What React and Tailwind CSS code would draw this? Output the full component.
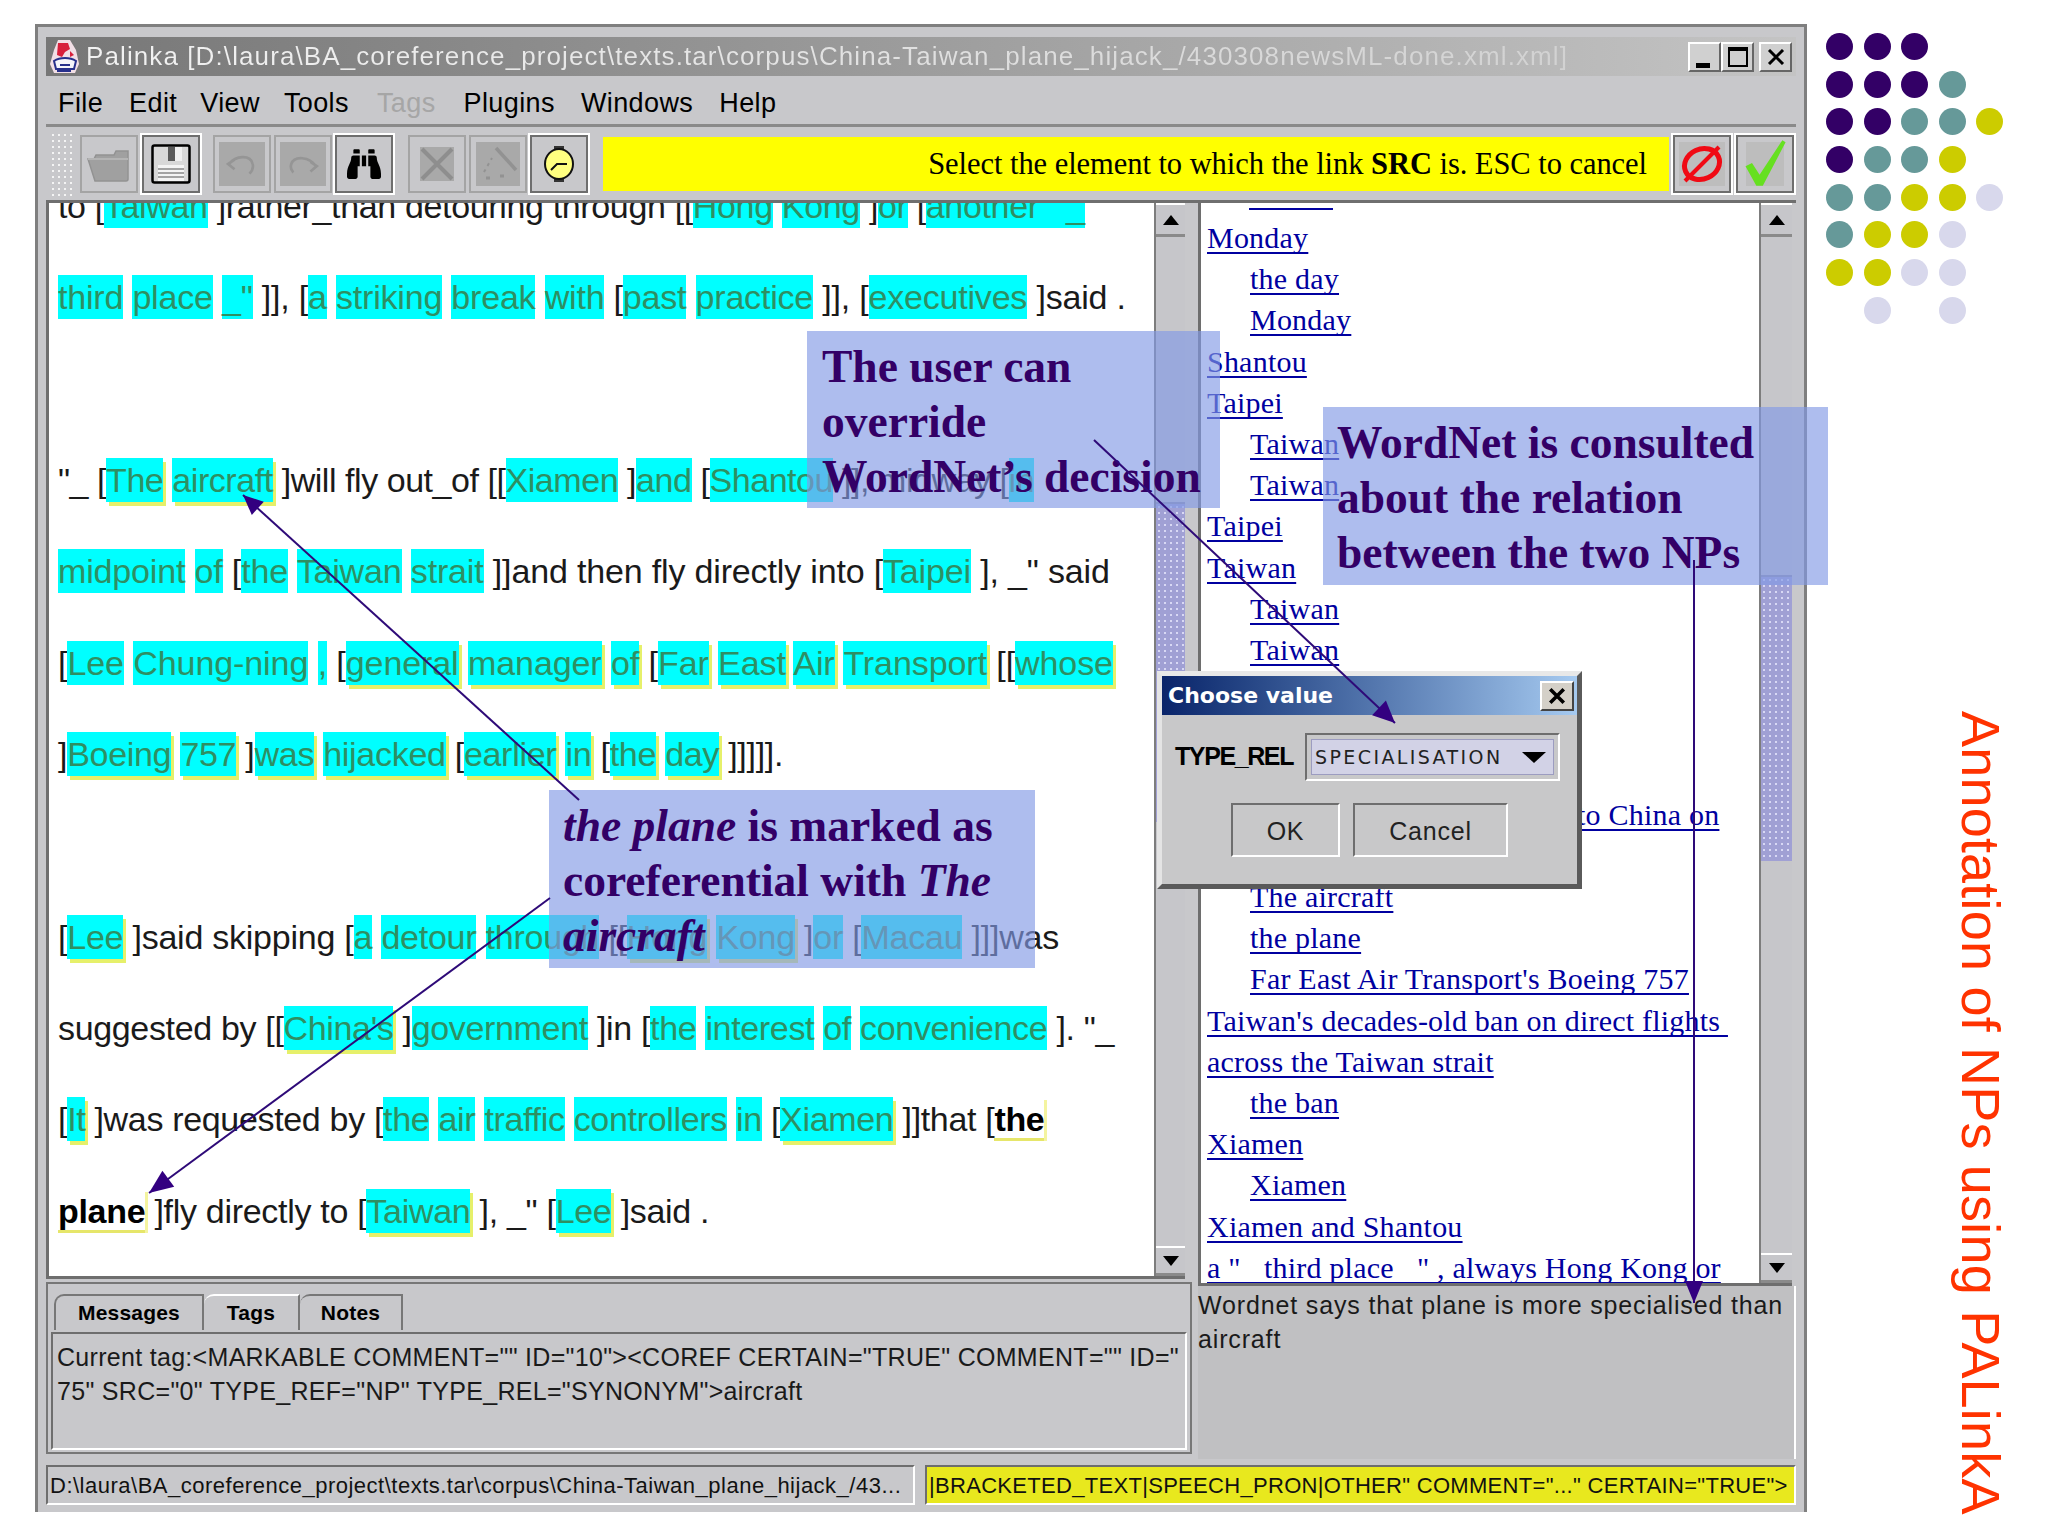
import { FaBinoculars } from 'react-icons/fa';

const sans = "font-['Liberation_Sans',Arial,sans-serif]";
const serif = "font-['Liberation_Serif','Times_New_Roman',serif]";

// {word} cyan, <word> cyan + yellow shadow, *word* bold with yellow underline
const textLines = [
  ['tracking-[-0.35px]', 'to [{Taiwan} ]rather_than detouring through [[{Hong} {Kong} ]{or} [{another   _}'],
  ['tracking-[-0.2px]', '{third} {place} {_"} ]], [{a} {striking} {break} {with} [{past} {practice} ]], [{executives} ]said .'],
  ['', ''],
  ['tracking-[-0.45px]', '"_ [<The> <aircraft> ]will fly out_of [[{Xiamen} ]{and} [{Shantou} ]], midway [{in}'],
  ['tracking-[-0.16px]', '{midpoint} {of} [{the} {Taiwan} {strait} ]]and then fly directly into [{Taipei} ], _" said'],
  ['tracking-[-0.08px]', '[{Lee} {Chung-ning} {,} [<general> <manager> <of> [<Far> <East> <Air> <Transport> [[<whose>'],
  ['tracking-[-0.3px]', ']<Boeing> <757> ]<was> <hijacked> [<earlier> <in> [<the> <day> ]]]]].'],
  ['', ''],
  ['tracking-[-0.24px]', '[<Lee> ]said skipping [{a} {detour} {through} [[<Hong> <Kong> ]{or} [{Macau} ]]]was'],
  ['tracking-[-0.34px]', 'suggested by [[<China\'s> ]{government} ]in [{the} {interest} {of} {convenience} ]. "_'],
  ['tracking-[-0.33px]', '[<It> ]was requested by [{the} {air} {traffic} {controllers} {in} [<Xiamen> ]]that [*the*'],
  ['tracking-[-0.3px]', '*plane* ]fly directly to [<Taiwan> ], _" [<Lee> ]said .'],
];

function TextLine({ line, cls }) {
  const parts = line.split(/(\{[^}]*\}|<[^>]*>|\*[^*]*\*)/).filter(Boolean);
  return (
    <div className={`h-[91.33px] leading-[91.33px] whitespace-pre ${cls}`}>
      {parts.map((p, i) => {
        const inner = p.slice(1, -1);
        if (p[0] === '{') return <span key={i} className="bg-[#00ffff] text-[#2e8f63] py-[3px]">{inner}</span>;
        if (p[0] === '<') return <span key={i} className="bg-[#00ffff] text-[#2e8f63] py-[3px] shadow-[3px_4px_0_#e6f06a]">{inner}</span>;
        if (p[0] === '*') return <span key={i} className="font-bold text-black border-b-[3px] border-[#e6e66a] shadow-[3px_0_0_#f4f4a0]">{inner}</span>;
        return <span key={i}>{p}</span>;
      })}
    </div>
  );
}

const listRows = [
  ['Monday', 0], ['the day', 1], ['Monday', 1], ['Shantou', 0], ['Taipei', 0], ['Taiwan', 1], ['Taiwan', 1],
  ['Taipei', 0], ['Taiwan', 0], ['Taiwan', 1], ['Taiwan', 1], ['', 0], ['', 0], ['', 0],
  ['to China on', 2], ['', 0], ['The aircraft', 1], ['the plane', 1], ["Far East Air Transport's Boeing 757", 1],
  ["Taiwan's decades-old ban on direct flights ", 0], ['across the Taiwan strait', 0], ['the ban', 1],
  ['Xiamen', 0], ['Xiamen', 1], ['Xiamen and Shantou', 0], ['a "   third place   " , always Hong Kong or', 0],
];

const dotColors = {
  P: 'bg-[#330066]',
  T: 'bg-[#669999]',
  Y: 'bg-[#cccc00]',
  L: 'bg-[#d8d8ec]',
  '-': 'bg-transparent',
};
const dots = ['PPP--', 'PPPT-', 'PPTTY', 'PTTY-', 'TTYYL', 'TYYL-', 'YYLL-', '-L-L-'];

const flatBtn = 'w-[58px] h-[58px] border-2 border-[#a4a4a4] flex items-center justify-center';
const etchBtn = 'w-[58px] h-[58px] border-2 border-t-[#6e6e6e] border-l-[#6e6e6e] border-r-[#6e6e6e] border-b-[#6e6e6e] outline-2 outline-white flex items-center justify-center';
const etchBox = 'border-2 border-t-[#6e6e6e] border-l-[#6e6e6e] border-r-white border-b-white';

function WinBtn({ children, cls = '' }) {
  return (
    <div className={`w-[33px] h-[30px] bg-[#d0d0d0] border-2 border-t-white border-l-white border-r-[#666] border-b-[#666] flex ${cls}`}>
      {children}
    </div>
  );
}

function ScrollBar({ thumbTop, thumbHeight, w }) {
  return (
    <div className={`${w} shrink-0 flex flex-col bg-[#c6c6ca] border-l-2 border-[#7d7d7d]`}>
      <div className="h-[34px] shrink-0 flex items-center justify-center border-b-[3px] border-[#8a8a8a] border-t-2 border-t-white">
        <div className="w-0 h-0 border-x-[8px] border-x-transparent border-b-[10px] border-b-black" />
      </div>
      <div className={thumbTop} />
      <div className={`${thumbHeight} shrink-0 bg-[#a0a0d4] bg-[radial-gradient(#d8d8f4_1.2px,transparent_1.4px)] bg-[length:6px_6px] border-t-2 border-[#9090a8]`} />
      <div className="flex-1" />
      <div className="h-[30px] shrink-0 flex items-center justify-center border-t-2 border-white border-b-[3px] border-b-[#8a8a8a]">
        <div className="w-0 h-0 border-x-[8px] border-x-transparent border-t-[10px] border-t-black" />
      </div>
    </div>
  );
}

function Toolbar() {
  return (
    <div className="h-[76px] flex items-center pl-[4px] pr-[2px] gap-[3px] border-b-[3px] border-[#6f6f6f]">
      <div className="w-[22px] h-[64px] mr-[5px] bg-[radial-gradient(#f4f4f4_1.3px,transparent_1.5px)] bg-[length:6px_6px]" />
      <div className={flatBtn}>
        <svg viewBox="0 0 44 36" className="w-[44px] h-[36px]">
          <path d="M1 13h6l2-4h18l2-4h12v28q0 2-2 2H8z" fill="#a0a0a0" stroke="#929292" strokeWidth="1.5" />
          <path d="M1 13h40" stroke="#b4b4b4" strokeWidth="2" />
        </svg>
      </div>
      <div className={`${etchBtn} ml-[1px]`}>
        <svg viewBox="0 0 40 40" className="w-[40px] h-[40px]">
          <rect x="1.5" y="1.5" width="37" height="37" rx="2" fill="#d8d8d8" stroke="#000" strokeWidth="2.5" />
          <rect x="17" y="3" width="14" height="14" fill="#f0f0f0" />
          <rect x="17" y="3" width="7" height="14" fill="#5a5a5a" />
          <rect x="7" y="21" width="26" height="16" fill="#f4f4f4" />
          <path d="M7 25h26M7 29h26M7 33h26" stroke="#888" strokeWidth="1.5" />
        </svg>
      </div>
      <div className={`${flatBtn} ml-[10px]`}>
        <div className="w-[46px] h-[44px] bg-[#a9a9a9] flex items-center justify-center">
          <svg viewBox="0 0 30 24" className="w-[32px] h-[26px]" fill="none" stroke="#959595" strokeWidth="2.5">
            <path d="M8 8l-6 4 6 5M3 12c6-8 20-9 22 0 1 4-1 7-3 9" />
          </svg>
        </div>
      </div>
      <div className={flatBtn}>
        <div className="w-[46px] h-[44px] bg-[#a9a9a9] flex items-center justify-center">
          <svg viewBox="0 0 30 24" className="w-[32px] h-[26px]" fill="none" stroke="#959595" strokeWidth="2.5">
            <path d="M22 10l6 4-6 5M27 14C21 5 7 4 4 12c-1 3 0 6 2 8" />
          </svg>
        </div>
      </div>
      <div className={etchBtn}>
        <FaBinoculars className="w-[34px] h-[36px] text-black" />
      </div>
      <div className={`${flatBtn} ml-[12px]`}>
        <div className="w-[34px] h-[34px] bg-[#a9a9a9] flex items-center justify-center">
          <svg viewBox="0 0 34 34" className="w-[34px] h-[34px]" stroke="#8e8e8e" strokeWidth="4"><path d="M2 2l30 30M32 2L2 32" /></svg>
        </div>
      </div>
      <div className={flatBtn}>
        <div className="w-[44px] h-[44px] bg-[#a9a9a9] flex items-center justify-center">
          <svg viewBox="0 0 44 44" className="w-[44px] h-[44px]" fill="none" stroke="#929292" strokeWidth="3.5">
            <path d="M20 6l20 22" />
            <path d="M8 30l8-14" strokeWidth="2" strokeDasharray="3 4" />
            <path d="M10 36h4M24 34h4" strokeWidth="3" />
          </svg>
        </div>
      </div>
      <div className={etchBtn}>
        <svg viewBox="0 0 32 36" className="w-[32px] h-[40px]">
          <rect x="11" y="0" width="10" height="4" fill="#333" />
          <rect x="11" y="32" width="10" height="4" fill="#333" />
          <ellipse cx="16" cy="18" rx="14" ry="15" fill="#ffff80" stroke="#111" strokeWidth="2" />
          <path d="M8 24l6-6h10" fill="none" stroke="#111" strokeWidth="2" />
        </svg>
      </div>
      <div className={`flex-1 h-[54px] ml-[12px] bg-[#ffff00] flex items-center justify-end pr-[22px] pt-[2px] text-[30.5px] text-black tracking-[-0.05px] ${serif}`}>
        Select the element to which the link&nbsp;<b>SRC</b>&nbsp;is. ESC to cancel
      </div>
      <div className={`${etchBtn} ml-[1px]`}>
        <div className="w-[46px] h-[44px] bg-[#bdbdbd] flex items-center justify-center">
          <svg viewBox="0 0 44 44" className="w-[44px] h-[44px]" fill="none" stroke="#f00a14" strokeWidth="5">
            <ellipse cx="22" cy="22" rx="18" ry="15" transform="rotate(-25 22 22)" />
            <path d="M5 39L39 5" strokeWidth="4" />
          </svg>
        </div>
      </div>
      <div className={`${etchBtn} ml-[2px]`}>
        <div className="w-[38px] h-[44px] bg-[#bdbdbd] flex items-center justify-center">
          <svg viewBox="0 0 40 48" className="w-[44px] h-[52px] shrink-0">
            <path d="M2 26l6-3 7 11L36 2l3 2-21 40h-6z" fill="#66e020" />
          </svg>
        </div>
      </div>
    </div>
  );
}

function Dialog() {
  return (
    <div className={`absolute left-[1157px] top-[671px] w-[425px] h-[218px] bg-[#c8c8c9] border-[5px] border-t-[#e8e8e8] border-l-[#e4e4e4] border-r-[#5a5a5a] border-b-[#5a5a5a] flex flex-col ${sans}`}>
      <div className="h-[39px] shrink-0 bg-linear-to-r from-[#0a246a] to-[#a6caf0] flex items-center justify-between pl-[6px] pr-[3px]">
        <span className="font-['DejaVu_Sans'] font-bold text-white text-[22px] leading-none">Choose value</span>
        <div className="w-[34px] h-[30px] bg-[#d4d0c8] border-2 border-t-white border-l-white border-r-[#444] border-b-[#444] flex items-center justify-center">
          <svg viewBox="0 0 16 16" className="w-[18px] h-[18px]" stroke="#000" strokeWidth="3.2"><path d="M2 2l12 12M14 2L2 14" /></svg>
        </div>
      </div>
      <div className="flex items-center mt-[18px] ml-[13px]">
        <span className="w-[130px] font-bold text-[25px] tracking-[-1.4px] text-black">TYPE_REL</span>
        <div className={`w-[255px] h-[48px] ${etchBox} p-[4px]`}>
          <div className="h-full bg-[#d2d2e6] border border-[#9c9cc0] flex items-center justify-between pl-[3px] pr-[7px]">
            <span className="text-[19px] tracking-[2.4px] font-['DejaVu_Sans'] text-[#222]">SPECIALISATION</span>
            <div className="w-0 h-0 border-x-[12px] border-x-transparent border-t-[11px] border-t-black" />
          </div>
        </div>
      </div>
      <div className="flex ml-[69px] mt-[22px] gap-[13px]">
        <div className={`w-[109px] h-[54px] ${etchBox} pt-[3px] flex items-center justify-center text-[25px] tracking-[0.8px] text-[#222]`}>OK</div>
        <div className={`w-[155px] h-[54px] ${etchBox} pt-[3px] flex items-center justify-center text-[25px] tracking-[0.8px] text-[#222]`}>Cancel</div>
      </div>
    </div>
  );
}

export default function App() {
  return (
    <div className={`relative w-[2048px] h-[1536px] bg-white overflow-hidden flex ${sans}`}>
      {/* the screenshot window */}
      <div className="w-[1772px] h-[1488px] mt-[24px] ml-[35px] bg-[#c8c8cb] border-t-[3px] border-x-[3px] border-[#7f7f7f] shrink-0 flex flex-col pt-[10px] px-[8px] pb-[7px]">
        <div className="h-[39px] shrink-0 bg-linear-to-r from-[#777777] to-[#c4c4c4] flex items-center pl-[2px] pr-[2px]">
          <svg viewBox="0 0 34 36" className="w-[34px] h-[36px] shrink-0">
            <path d="M10 1h12l6 10 3 14-4 9H6L2 25l4-14z" fill="#f2dfe6" />
            <path d="M10 4h10l2 6-5 3-3 5-5-2zM22 12l4 4-4 2z" fill="#d8203c" />
            <path d="M6 22c6-4 16-4 22 0l-2 8H8z" fill="#f4f4fa" stroke="#27308c" strokeWidth="2" />
            <path d="M12 26h10M9 32h14" stroke="#27308c" strokeWidth="2" />
          </svg>
          <span className="ml-[4px] text-[26px] tracking-[1.1px] whitespace-nowrap bg-linear-to-r from-[#f2f2f2] to-[#d2d2d2] bg-clip-text text-transparent">Palinka [D:\laura\BA_coreference_project\texts.tar\corpus\China-Taiwan_plane_hijack_/430308newsML-done.xml.xml]</span>
          <div className="ml-auto flex items-center shrink-0 pr-[2px]">
            <WinBtn cls="items-end pl-[6px] pb-[2px]"><div className="w-[14px] h-[5px] bg-black" /></WinBtn>
            <WinBtn cls="items-center justify-center"><div className="w-[20px] h-[20px] border-2 border-t-[4px] border-black" /></WinBtn>
            <div className="w-[5px]" />
            <WinBtn cls="items-center justify-center"><svg viewBox="0 0 18 16" className="w-[18px] h-[16px]" stroke="#000" strokeWidth="3"><path d="M2 1l14 14M16 1L2 15" /></svg></WinBtn>
          </div>
        </div>

        <div className="h-[51px] shrink-0 flex items-center gap-[26px] pl-[12px] pt-[6px] text-[27px] tracking-[0.4px] text-black border-b-[3px] border-[#8a8a8a]">
          <span>File</span>
          <span>Edit</span>
          <span className="-ml-[3px]">View</span>
          <span className="-ml-[2px]">Tools</span>
          <span className="ml-[2px] text-[#a6a6a6]">Tags</span>
          <span className="ml-[2px]">Plugins</span>
          <span>Windows</span>
          <span>Help</span>
        </div>

        <Toolbar />

        <div className="flex-1 min-h-0 flex">
          {/* left column */}
          <div className="w-[1146px] shrink-0 flex flex-col">
            <div className="h-[1076px] shrink-0 mr-[7px] flex bg-white border-l-[3px] border-b-[3px] border-[#6e6e6e] overflow-hidden">
              <div className="flex-1 min-w-0 overflow-hidden pl-[9px] text-[34px] text-[#1a1a1a]">
                <div className="-mt-[42px]">
                  {textLines.map(([cls, line], i) => <TextLine key={i} line={line} cls={cls} />)}
                </div>
              </div>
              <ScrollBar w="w-[31px]" thumbTop="h-[265px] shrink-0" thumbHeight="h-[320px]" />
            </div>
            <div className="h-[172px] shrink-0 mt-[3px] border-2 border-[#777] px-[3px] pt-[10px]">
              <div className="flex items-end h-[36px] pl-[3px] font-bold text-[21px] tracking-[0.2px] text-black">
                <div className="w-[150px] h-full border-t-2 border-x-2 border-[#777] rounded-tl-[10px] flex items-center justify-center">Messages</div>
                <div className="w-[96px] h-full border-t-2 border-t-white border-r-2 border-[#777] rounded-tl-[10px] flex items-center justify-center">Tags</div>
                <div className="w-[103px] h-full border-t-2 border-r-2 border-[#777] rounded-tl-[10px] flex items-center justify-center">Notes</div>
              </div>
              <div className={`h-[118px] mt-[2px] ${etchBox} pl-[4px] pt-[6px] text-[25px] leading-[34px] tracking-[0.3px] text-[#1a1a1a] whitespace-pre`}>
                {'Current tag:<MARKABLE COMMENT="" ID="10"><COREF CERTAIN="TRUE" COMMENT="" ID="\n75" SRC="0" TYPE_REF="NP" TYPE_REL="SYNONYM">aircraft'}
              </div>
            </div>
          </div>

          {/* right column */}
          <div className="flex-1 min-w-0 ml-[6px] flex flex-col">
            <div className="h-[1083px] shrink-0 mr-[4px] flex bg-white border-l-[3px] border-b-[3px] border-[#6e6e6e] overflow-hidden">
              <div className={`flex-1 min-w-0 overflow-hidden pl-[6px] text-[30px] tracking-[0.22px] text-[#0000a0] ${serif}`}>
                <div className="w-[84px] h-[2px] ml-[42px] mt-[5px] bg-[#0000a0]" />
                <div className="mt-[7px]">
                  {listRows.map(([t, d], i) => (
                    <div key={i} className={`h-[41.2px] leading-[41.2px] whitespace-pre ${d === 1 ? 'pl-[43px]' : d === 2 ? 'pl-[370px]' : ''}`}>
                      <span className="underline decoration-2 underline-offset-[4px] [text-decoration-skip-ink:none]">{t}</span>
                    </div>
                  ))}
                </div>
              </div>
              <ScrollBar w="w-[33px]" thumbTop="h-[338px] shrink-0" thumbHeight="h-[286px]" />
            </div>
            <div className="flex-1 min-h-0 bg-[#c0c0c2] pt-[2px] text-[25px] leading-[34px] tracking-[0.85px] text-[#1a1a1a] border-r-2 border-white">
              Wordnet says that plane is more specialised than<br />aircraft
            </div>
          </div>
        </div>

        <div className="h-[40px] shrink-0 mt-[6px] flex gap-[10px] text-[22px] text-[#111]">
          <div className={`w-[869px] h-full ${etchBox} flex items-center pl-[2px] whitespace-nowrap tracking-[0.5px]`}>D:\laura\BA_coreference_project\texts.tar\corpus\China-Taiwan_plane_hijack_/43...</div>
          <div className={`flex-1 h-full ${etchBox} bg-[#e8e81e] flex items-center pl-[2px] whitespace-nowrap tracking-[0.3px]`}>|BRACKETED_TEXT|SPEECH_PRON|OTHER" COMMENT="..." CERTAIN="TRUE"&gt;</div>
        </div>
      </div>

      {/* decoration on the right of the slide */}
      <div className="flex-1 min-w-0 flex flex-col items-start pl-[19px] pt-[33px]">
        <div className="grid grid-cols-[repeat(5,27px)] gap-x-[10.5px] gap-y-[10.7px]">
          {dots.flatMap((row, r) => row.split('').map((c, i) => (
            <div key={`${r}-${i}`} className={`w-[27px] h-[27px] rounded-full ${dotColors[c]}`} />
          )))}
        </div>
        <div className="self-end mr-[40px] mt-[387px] [writing-mode:vertical-rl] whitespace-nowrap text-[54px] tracking-[0.2px] leading-none text-[#ff3300]">
          Annotation of NPs using PALinkA
        </div>
      </div>

      <Dialog />

      {/* callouts laid over the screenshot */}
      <div className={`absolute left-[807px] top-[331px] w-[413px] h-[177px] bg-[#8299e5]/65 pl-[15px] pt-[8px] text-[45.5px] leading-[55px] font-bold text-[#330066] whitespace-nowrap ${serif}`}>
        The user can<br />override<br />WordNet’s decision
      </div>
      <div className={`absolute left-[1323px] top-[407px] w-[505px] h-[178px] bg-[#8299e5]/65 pl-[14px] pt-[8px] text-[45.5px] leading-[55px] font-bold text-[#330066] whitespace-nowrap ${serif}`}>
        WordNet is consulted<br />about the relation<br />between the two NPs
      </div>
      <div className={`absolute left-[549px] top-[790px] w-[486px] h-[178px] bg-[#8299e5]/65 pl-[14px] pt-[8px] text-[45.5px] leading-[55px] font-bold text-[#330066] whitespace-nowrap ${serif}`}>
        <i>the plane</i> is marked as<br />coreferential with <i>The</i><br /><i>aircraft</i>
      </div>

      <svg className="absolute inset-0 w-full h-full pointer-events-none" viewBox="0 0 2048 1536" fill="#330080" stroke="#2e0a78" strokeWidth="2">
        <path d="M579 800L243 495" fill="none" />
        <polygon points="243,495 251.8,515 263.8,501.7" stroke="none" />
        <path d="M550 898L149 1193" fill="none" />
        <polygon points="149,1193 174.2,1186.8 162.4,1170.8" stroke="none" />
        <path d="M1094 440L1395 723" fill="none" />
        <polygon points="1395,723 1372.1,715.2 1385.9,700.6" stroke="none" />
        <path d="M1694 560V1303" fill="none" />
        <polygon points="1694,1303 1685,1281 1703,1281" stroke="none" />
      </svg>
    </div>
  );
}
